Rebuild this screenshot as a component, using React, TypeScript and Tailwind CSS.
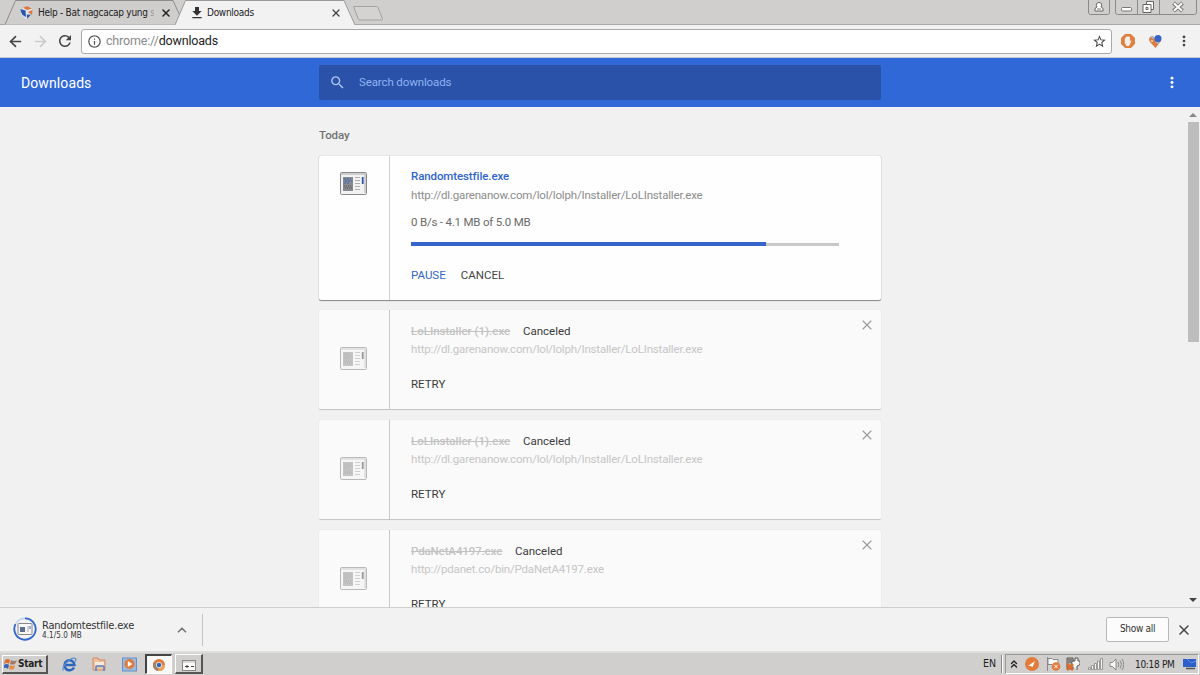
import { ArrowLeft, ArrowRight, ChevronUp, ChevronsUp, X } from "lucide-react";
import { MdRefresh, MdInfoOutline, MdFileDownload, MdSearch, MdStarBorder } from "react-icons/md";

type CanceledItem = {
  name: string;
  url: string;
  nameClass: string;
};

const canceled: CanceledItem[] = [
  {
    name: "LoLInstaller (1).exe",
    url: "http://dl.garenanow.com/lol/lolph/Installer/LoLInstaller.exe",
    nameClass: "w-[99px]",
  },
  {
    name: "LoLInstaller (1).exe",
    url: "http://dl.garenanow.com/lol/lolph/Installer/LoLInstaller.exe",
    nameClass: "w-[99px]",
  },
  {
    name: "PdaNetA4197.exe",
    url: "http://pdanet.co/bin/PdaNetA4197.exe",
    nameClass: "w-[91px] tracking-[-0.12px]",
  },
];

const FileIcon = ({ className = "", muted = false }: { className?: string; muted?: boolean }) => (
  <svg viewBox="0 0 27 23" className={className} fill="none">
    <rect x="0.5" y="0.5" width="26" height="22" rx="1.2" fill={muted ? "#f6f6f6" : "#f2f2f2"} stroke={muted ? "#b9b9b9" : "#888"} />
    <path d="M1 2h25" stroke={muted ? "#cfcfcf" : "#aaa"} />
    <rect x="3" y="5" width="10" height="14" fill={muted ? "#c4c4c4" : "#868b92"} />
    <path d="M4 7h7M5 9h7M4 11h6" stroke={muted ? "#b5b5b5" : "#3d62b0"} strokeDasharray="2 1" />
    <path d="M4 14h8M5 16h7" stroke={muted ? "#b0b0b0" : "#555"} strokeDasharray="1 1" />
    <path d="M15 5.5h5M15 8.5h5M15 11.5h5M15 14.5h5M15 17.5h5" stroke={muted ? "#d0d0d0" : "#b0b0b0"} />
    <path d="M22.7 5v7" stroke={muted ? "#999" : "#2d57b3"} strokeWidth="1.8" />
    <path d="M25 3v18" stroke={muted ? "#ccc" : "#aaa"} />
  </svg>
);

const Dots = ({ className = "" }: { className?: string }) => (
  <svg viewBox="0 0 4 14" className={className} fill="currentColor">
    <circle cx="2" cy="2.3" r="1.6" />
    <circle cx="2" cy="7" r="1.6" />
    <circle cx="2" cy="11.7" r="1.6" />
  </svg>
);

const TabStrip = () => (
  <div className="flex h-[25px] shrink-0 items-start border-b border-[#a9a9a9] bg-[#d0cfcd] font-['DejaVu_Sans_Condensed','DejaVu_Sans',sans-serif] text-[10px] text-[#222]">
    <div className="relative ml-[5px] flex h-[25px] w-[178px] items-center pl-[15px]">
      <svg viewBox="0 0 178 25" className="absolute inset-0 h-full w-full" fill="#cfcecd">
        <path d="M0 24.5 10.5 .5H168l11 24" stroke="#8c8c8c" />
      </svg>
      <svg viewBox="0 0 13 13" className="relative size-[13px] shrink-0">
        <path d="M1 3 6 1l6 2-1 7-5 3-5-4z" fill="#dfe3ea" />
        <path d="M.5 3 5.500 4.500 6 11 2.500 9 1 6z" fill="#2d56a8" />
        <path d="m3 1.800 4-1.500 5 2.200-5 1.500zM8 6l4.500-2.200L12 9z" fill="#e17638" />
        <path d="m6.800 8.500 4.200.2-3.800 4z" fill="#2d56a8" />
      </svg>
      <span className="relative ml-[5px] w-[116px] overflow-hidden whitespace-nowrap tracking-[-0.28px]">
        Help - Bat nagcacap yung <span className="text-[#999]">s</span>
      </span>
      <X className="relative ml-[6px] size-[12px]" strokeWidth={3} />
    </div>
    <div className="relative z-10 -ml-[8px] flex h-[25px] w-[180px] items-center pl-[14px]">
      <svg viewBox="0 0 180 25" className="absolute inset-0 h-full w-full" fill="#f2f2f2">
        <path d="M0 25 10.5 .5H169l11 24.5" stroke="#9a9a9a" />
        <path d="M1 25h178" stroke="#f2f2f2" strokeWidth="2" />
      </svg>
      <MdFileDownload className="relative mt-px size-[16px] text-[#333]" />
      <span className="relative ml-[2px] tracking-[-0.28px]">Downloads</span>
      <X className="relative ml-auto mr-[13px] size-[12px] text-[#444]" strokeWidth={2.600} />
    </div>
    <svg viewBox="0 0 32 16" className="-ml-[3px] mt-[5px] h-[16px] w-[32px]" fill="#d4d3d1">
      <path d="M1.5 1.5h23q1 0 1.5 1l4.5 11.5q.3 1-.7 1H8q-1.2 0-1.7-1z" stroke="#a2a2a2" />
    </svg>
    <div className="ml-auto flex text-[#8a8a8a]">
      <svg viewBox="0 0 22 15" className="h-[15px] w-[22px]" fill="none" stroke="currentColor">
        <path d="M.5 0v12q0 2.500 2 2.500h17q2 0 2-2.500V0" />
        <path d="M7 11V9q0-1.500 2-2-1-1.500-.5-3Q9 2.500 11 2.500T13.500 4q.5 1.500-.5 3 2 .5 2 2v2z" fill="#fff" stroke="#666" />
        <path d="M9 9h4" stroke="#777" />
      </svg>
      <svg viewBox="0 0 82 15" className="ml-[5px] mr-[3px] h-[15px] w-[82px]" fill="none" stroke="currentColor">
        <path d="M.5 0v12q0 2.500 2 2.500h77q2 0 2-2.500V0M22.500 0v14M44.500 0v14" />
        <rect x="6.500" y="7.500" width="10" height="3.500" rx="1" fill="#fff" stroke="#777" />
        <path d="M31.500 1.500h7v8h-2.500v3h-8v-8h3.500z" fill="#fff" stroke="#666" />
        <path d="M31.500 4.500h4.500v5M31 7.500h2v2h-2z" stroke="#666" />
        <path d="m58.500 3 9 8M67.500 3l-9 8" stroke="#777" strokeWidth="4" />
        <path d="m59 3.300 8 7.400M67 3.300l-8 7.400" stroke="#fff" strokeWidth="2" />
      </svg>
    </div>
  </div>
);

const Toolbar = () => (
  <div className="flex h-[33px] shrink-0 items-center border-b border-[#c4c9d4] bg-[#f2f2f2] pl-[7px]">
    <ArrowLeft className="size-[17px] text-[#444]" strokeWidth={2.400} />
    <ArrowRight className="ml-[8px] size-[17px] text-[#ccc]" strokeWidth={2.400} />
    <MdRefresh className="ml-[7px] size-[18px] text-[#444]" />
    <div className="ml-[7px] flex h-[25px] w-[1031px] items-center rounded-[3px] border border-[#a9aaa9] bg-white pl-[5px] pr-[4px]">
      <MdInfoOutline className="size-[15px] text-[#555]" />
      <span className="ml-[4px] font-[Roboto,sans-serif] text-[12.500px] tracking-[-0.18px] text-[#222]">
        <span className="text-[#8a8a8a]">chrome://</span>downloads
      </span>
      <MdStarBorder className="ml-auto size-[15px] text-[#444]" />
    </div>
    <svg viewBox="0 0 14 14" className="ml-[9px] size-[14px]">
      <path d="M4 0h6l4 4v6l-4 4H4l-4-4V4z" fill="#de8142" />
      <path d="M3.800 5q0-1 .9-1V3q.9-1 1.400 0 .7-1.500 1.400-.2 1.200-.8 1.400.7v3.500l1.600-.8-1.500 4.300-1.500 1.500H5.600L3.800 9z" fill="#f5efe9" />
    </svg>
    <svg viewBox="0 0 13 13" className="ml-[14px] size-[13px]">
      <path d="M1 2q3-2 5.500 1L12 6 6.500 13 1 7q-2-3 0-5z" fill="#dc7d42" />
      <circle cx="9" cy="3.600" r="3.500" fill="#3563ca" />
      <path d="M1 2q3-2 5 1L4 4zM6 7l5 0-2 2z" fill="#9fb3d0" />
      <circle cx="3" cy="6" r="1" fill="#f2d3bc" />
    </svg>
    <Dots className="ml-[20px] h-[12px] w-[4px] text-[#444]" />
  </div>
);

const Header = () => (
  <div className="flex h-[49px] shrink-0 items-center bg-[#3068d8] pl-[21px] pr-[26px]">
    <h1 className="w-[298px] pt-[2px] text-[14px] tracking-[0.1px] text-white">Downloads</h1>
    <div className="flex h-[35px] w-[562px] items-center rounded-[2px] bg-[#2a52a8] pl-[10px] text-[#a9c4f5]">
      <MdSearch className="size-[17px]" />
      <span className="ml-[13px] text-[11.500px] tracking-[-0.12px] text-[#8fb2f2]">Search downloads</span>
    </div>
    <Dots className="ml-auto h-[13px] w-[4px] text-white" />
  </div>
);

const ActiveDownload = () => (
  <div className="flex h-[144px] rounded-[2px] bg-[#fefefe] shadow-[0_1px_1px_#858585,0_0_1px_#999]">
    <div className="flex w-[71px] justify-center border-r border-[#d0d0d0] pt-[16px]">
      <FileIcon className="ml-[-2px] h-[23px] w-[27px]" />
    </div>
    <div className="flex flex-1 flex-col pl-[21px] pt-[12px] leading-[16px]">
      <span className="text-[11.500px] font-medium tracking-[-0.1px] text-[#2f65cc]">Randomtestfile.exe</span>
      <span className="mt-[3px] text-[11.500px] tracking-[-0.185px] text-[#8c8c8c]">
        http://dl.garenanow.com/lol/lolph/Installer/LoLInstaller.exe
      </span>
      <span className="mt-[11px] text-[11.500px] tracking-[-0.2px] text-[#6a6a6a]">0 B/s - 4.1 MB of 5.0 MB</span>
      <div className="mt-[12px] h-[4px] w-[428px] bg-[linear-gradient(#fefefe_1px,#c8c8c8_1px)]">
        <div className="h-full w-[355px] bg-[#3565cb]" />
      </div>
      <div className="mt-[21px] flex gap-[15px] text-[11.500px]">
        <span className="text-[#3565cb]">PAUSE</span>
        <span className="text-[#444]">CANCEL</span>
      </div>
    </div>
  </div>
);

const CanceledDownload = ({ item }: { item: CanceledItem }) => (
  <div className="flex h-[100px] shrink-0 rounded-[2px] border-b border-[#c6c6c6] bg-[#fafafa] shadow-[0_0_1px_#ccc]">
    <div className="flex w-[71px] items-center justify-center border-r border-[#c9c9c9]">
      <FileIcon muted className="-mt-[2px] ml-[-2px] h-[23px] w-[27px]" />
    </div>
    <div className="flex flex-1 flex-col pl-[21px] pt-[13px] text-[11.500px] leading-[16px]">
      <div className="flex whitespace-nowrap">
        <span className={`${item.nameClass} font-medium text-[#c2c2c2] line-through`}>{item.name}</span>
        <span className="ml-[13px] text-[#3a3a3a]">Canceled</span>
      </div>
      <span className="mt-[2px] tracking-[-0.185px] text-[#c6c6c6]">{item.url}</span>
      <span className="mt-[19px] text-[#3a3a3a]">RETRY</span>
    </div>
    <X className="mr-[6px] mt-[7px] size-[16px] text-[#999]" strokeWidth={1.600} />
  </div>
);

const Scrollbar = () => (
  <div className="flex w-[15px] flex-col items-center bg-[#f1f1f1]">
    <svg viewBox="0 0 8 4" className="mt-[6px] h-[4px] w-[8px]" fill="#888">
      <path d="M0 4 4 0l4 4z" />
    </svg>
    <div className="ml-[2px] mt-[5px] h-[220px] w-[11px] bg-[#bdbdbd]" />
    <svg viewBox="0 0 8 4" className="mb-[5px] mt-auto h-[4px] w-[8px]" fill="#444">
      <path d="M0 0h8L4 4z" />
    </svg>
  </div>
);

const DownloadShelf = () => (
  <div className="flex h-[44px] shrink-0 items-center border-t border-[#cfcfcf] bg-[#f2f2f2] font-['DejaVu_Sans_Condensed','DejaVu_Sans',sans-serif] text-[#333]">
    <div className="flex h-[32px] w-[203px] items-center border-r border-[#c4c4c4] pl-[13px]">
      <svg viewBox="0 0 24 24" className="-mt-[2px] size-[24px]" fill="none">
        <circle cx="12" cy="12" r="10.700" stroke="#c3d2ef" strokeWidth="1.500" />
        <path d="M12 1.300a10.700 10.700 0 1 1-9.500 5.800" stroke="#3467cc" strokeWidth="1.800" />
        <rect x="5" y="6.500" width="14" height="11" rx="1" fill="#f7f7f7" stroke="#888" />
        <path d="M7 10h5v5H7z" fill="#5c6d8e" />
        <path d="M14 10h2M14 12h2M14 14h2" stroke="#aaa" />
        <path d="M17 9v3" stroke="#3467cc" />
      </svg>
      <div className="ml-[5px] flex w-[130px] flex-col pt-px">
        <span className="text-[11px] leading-[12px] tracking-[-0.2px]">Randomtestfile.exe</span>
        <span className="text-[8px] leading-[8px] tracking-[0.1px]">4.1/5.0 MB</span>
      </div>
      <ChevronUp className="ml-[3px] size-[14px] text-[#777]" strokeWidth={3} />
    </div>
    <div className="ml-auto flex h-[25px] w-[63px] items-center justify-center rounded-[2px] border border-[#b8b8b8] bg-[#fcfcfc] pb-[2px] text-[10px] tracking-[-0.3px]">
      Show all
    </div>
    <X className="ml-[7px] mr-[8px] size-[16px] text-[#444]" strokeWidth={2.200} />
  </div>
);

const Taskbar = () => (
  <div className="flex h-[24px] shrink-0 items-center border-t-2 border-[#dededc] bg-[#d0cfcd] font-['DejaVu_Sans_Condensed','DejaVu_Sans',sans-serif] text-[10px] text-[#222]">
    <div className="ml-[2px] flex h-[19px] w-[46px] items-center border-b-2 border-l border-r-2 border-t border-b-[#555] border-l-white border-r-[#555] border-t-white pl-[1px] font-bold">
      <svg viewBox="0 0 13 13" className="size-[13px] shrink-0">
        <path d="M1 3q3-2 5 0L5 7Q3 5 0 7z" fill="#df6f35" />
        <path d="M7 3q3 2 6 0l-2 4q-3 1-5 0z" fill="#a57a62" />
        <path d="M0 8q3-2 5 0l-1 4Q2 10 0 11z" fill="#3564b7" />
        <path d="M6 8q3 2 5 0l-1 4q-3 1-5 0z" fill="#e88a45" />
      </svg>
      <span className="ml-px tracking-[-0.25px]">Start</span>
    </div>
    <svg viewBox="0 0 15 15" className="ml-[14px] size-[15px]" fill="none">
      <path d="M12 10.500A5 5 0 1 1 12.500 8H4" stroke="#2c66c0" strokeWidth="2.500" />
      <path d="M1.500 13.500C-1 11 8-1 13.500 1.500q1 1-.5 3" stroke="#5b8ed2" strokeWidth="1.300" />
    </svg>
    <svg viewBox="0 0 15 15" className="ml-[15px] size-[15px]" fill="none">
      <path d="M1 3V1h5l1 2h6v10H1z" fill="#ecc3a0" stroke="#d8875c" />
      <path d="M3 5h9v3H3z" fill="#f6e9dd" />
      <path d="M4 14v-4q0-1 1-1h6q1 0 1 1v4" stroke="#5b87c6" strokeWidth="1.600" />
    </svg>
    <svg viewBox="0 0 15 15" className="ml-[15px] size-[15px]">
      <rect x=".5" y="1" width="14" height="13" fill="#9cb8dc" stroke="#6590cb" />
      <circle cx="7.500" cy="7" r="5" fill="#e07a38" />
      <path d="M5.800 4v6l4.600-3z" fill="#fff" />
    </svg>
    <div className="ml-[8px] flex h-[20px] w-[27px] items-center justify-center border-b border-l-2 border-r border-t-2 border-b-white border-l-[#444] border-r-white border-t-[#444] bg-[#f7f7f6]">
      <svg viewBox="0 0 12 12" className="size-[12px]">
        <circle cx="6" cy="6" r="6" fill="#df7a40" />
        <path d="M6 6 .8 3A6 6 0 0 0 5 12z" fill="#a18168" />
        <path d="M6 6h6a6 6 0 0 1-7 6z" fill="#e9a05b" />
        <circle cx="6" cy="6" r="2.900" fill="#eee" />
        <circle cx="6" cy="6" r="2.200" fill="#3263b5" />
      </svg>
    </div>
    <div className="ml-[3px] flex h-[20px] w-[28px] items-center justify-center border-b-2 border-l border-r-2 border-t border-b-[#555] border-l-white border-r-[#555] border-t-white">
      <svg viewBox="0 0 14 11" className="mt-[3px] h-[11px] w-[14px]">
        <rect x=".5" y=".5" width="13" height="10" fill="#fafafa" stroke="#888" />
        <path d="M1 2h12" stroke="#bbb" />
        <path d="M3 6.500h4M5 5v3M9 6.500h3" stroke="#444" />
      </svg>
    </div>
    <span className="ml-auto text-[10.500px]">EN</span>
    <div className="ml-[5px] h-[18px] w-[2px] border-l border-r border-l-[#888] border-r-white" />
    <div className="ml-[2px] mr-px flex h-[20px] w-[194px] items-center border border-b-white border-l-[#999] border-r-white border-t-[#999] pl-[2px]">
      <ChevronsUp className="size-[12px]" strokeWidth={2.800} />
      <svg viewBox="0 0 14 14" className="ml-[5px] size-[14px]">
        <circle cx="7" cy="7" r="7" fill="#e27b3b" />
        <path d="m3 9 7-5-2.500 6-2-1z" fill="#fff" />
      </svg>
      <svg viewBox="0 0 15 14" className="ml-[7px] h-[14px] w-[15px]">
        <path d="M1.500 0v14" stroke="#888" />
        <path d="M2 1.500h4l1 1h5v6H7l-1-1H2z" fill="#fafafa" stroke="#888" />
        <circle cx="10" cy="9.500" r="4.300" fill="#df7b3c" />
        <path d="m8.300 7.800 3.400 3.400m0-3.400-3.400 3.400" stroke="#fff" />
      </svg>
      <svg viewBox="0 0 14 14" className="ml-[5px] size-[14px]" fill="none">
        <path d="M1 1h6v11H1z" fill="#b4aaa2" stroke="#555" />
        <path d="M2 3h4M2 5h4" stroke="#555" />
        <path d="M6 8q-1-3 1-4h2V1h3v3h2v3q-1 2-3 2v4" fill="#f5f5f5" stroke="#555" />
        <path d="m1 7 6 6m0-6-6 6" stroke="#da6c2d" strokeWidth="2.500" />
      </svg>
      <svg viewBox="0 0 15 12" className="ml-[8px] h-[12px] w-[15px]" fill="#f1f1f1" stroke="#888" strokeWidth=".8">
        <path d="M.5 9.500h2v2h-2zM3.500 7.500h2v4h-2zM6.500 5.500h2v6h-2zM9.500 3h2v8.500h-2zM12.500.5h2v11h-2z" />
      </svg>
      <svg viewBox="0 0 15 13" className="ml-[6px] h-[13px] w-[15px]" fill="none" stroke="#888">
        <path d="M1 4.500h2.500L7 1v11L3.500 8.500H1z" fill="#f7f7f7" />
        <path d="M9 4q1.500 2.500 0 5M11 2.500q3 4 0 8M13 1q3.500 5.500 0 11" />
      </svg>
      <span className="ml-[11px] whitespace-nowrap tracking-[-0.3px]">10:18 PM</span>
      <svg viewBox="0 0 13 12" className="ml-auto mr-[2px] h-[12px] w-[13px] shrink-0">
        <path d="M0 1h13v8H0z" fill="#2c5fc9" />
        <path d="m4 1 4 4 5-2" stroke="#5c8ce0" fill="none" />
        <path d="M3 10.500h9" stroke="#555" strokeWidth="1.500" />
      </svg>
    </div>
  </div>
);

export default function App() {
  return (
    <div className="flex h-[675px] w-[1200px] flex-col overflow-hidden bg-[#f1f1f1] font-[Roboto,sans-serif]">
      <TabStrip />
      <Toolbar />
      <Header />
      <main className="flex h-[500px] shrink-0 overflow-hidden">
        <div className="ml-[319px] flex w-[562px] flex-col">
          <h2 className="mb-[12px] mt-[20px] text-[11.500px] font-medium leading-[16px] tracking-[-0.1px] text-[#717171]">
            Today
          </h2>
          <div className="mt-px flex flex-col gap-[10px]">
            <ActiveDownload />
            {canceled.map((item, i) => (
              <CanceledDownload key={i} item={item} />
            ))}
          </div>
        </div>
        <div className="ml-auto flex">
          <Scrollbar />
        </div>
      </main>
      <DownloadShelf />
      <Taskbar />
    </div>
  );
}
